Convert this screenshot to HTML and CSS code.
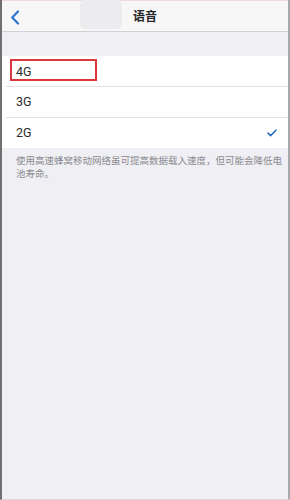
FILE: index.html
```html
<!DOCTYPE html>
<html lang="zh">
<head>
<meta charset="utf-8">
<link rel="stylesheet" href="styles.css">
</head>
<body>
<div class="screen">
  <header class="nav">
    <svg class="back" width="10" height="15" viewBox="0 0 10 15"><path d="M8 1.5 L2.2 7.5 L8 13.5" fill="none" stroke="#2a78d2" stroke-width="2.2" stroke-linecap="round" stroke-linejoin="round"/></svg>
    <div class="blur"></div>
    <div class="title">语音</div>
  </header>
  <div class="gap"></div>
  <ul class="list">
    <li class="row"><span>4G</span><div class="mark"></div></li>
    <li class="row"><span>3G</span></li>
    <li class="row"><span>2G</span><svg class="check" width="10" height="8" viewBox="0 0 10 8"><path d="M1 4.2 L3.6 6.6 L9 1.2" fill="none" stroke="#2a6fc0" stroke-width="1.6" stroke-linecap="round" stroke-linejoin="round"/></svg></li>
  </ul>
  <p class="note">使用高速蜂窝移动网络虽可提高数据载入速度，但可能会降低电池寿命。</p>
</div>
</body>
</html>
```
FILE: styles.css
```css
html, body { margin: 0; padding: 0; }
body { width: 290px; height: 500px; overflow: hidden; background: #efeff4; font-family: "Roboto", "Noto Sans CJK SC", sans-serif; }
.screen { box-sizing: border-box; height: 500px; border-left: 2px solid #707070; border-right: 2px solid #a8a8ac; border-bottom: 1px solid #d8d8dc; background: #efeff4; }
.nav { position: relative; box-sizing: border-box; height: 32px; border-top: 1px solid #f1d9dd; border-bottom: 1px solid #d2d2d6; background: #f7f7f8; display: flex; align-items: center; padding: 2px 0 0 8px; }
.back { display: block; }
.blur { position: absolute; left: 78px; top: -1px; width: 42px; height: 29px; border-radius: 5px; background: #ececee; }
.title { position: absolute; left: 0; right: 0; top: 7px; text-align: center; font-family: "Noto Sans CJK SC", sans-serif; font-size: 12px; font-weight: 600; color: #262626; line-height: 16px; }
.gap { height: 24px; }
.list { list-style: none; margin: 0; padding: 0; background: #fff; }
.row { position: relative; height: 31px; display: flex; align-items: center; padding-left: 14px; font-size: 12.5px; color: #2b2b2b; }
.row:first-child { height: 30px; }
.row + .row::before { content: ""; position: absolute; left: 4px; right: 0; top: 0; height: 1px; background: #e3e3e6; }
.mark { position: absolute; left: 8px; top: 3px; width: 83px; height: 18px; border: 2px solid #d9383d; }
.check { position: absolute; right: 11px; top: 12px; }
.note { margin: 0; padding: 6px 6px 0 14px; font-family: "Noto Sans CJK SC", sans-serif; font-size: 9.5px; line-height: 13px; color: #8a8a8f; }
```
